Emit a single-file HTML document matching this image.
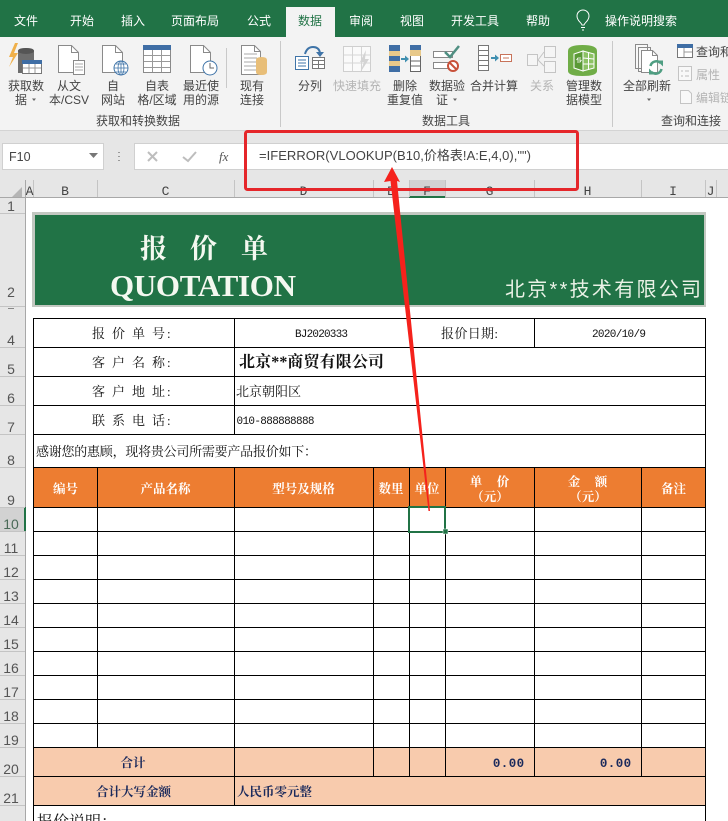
<!DOCTYPE html>
<html lang="zh"><head><meta charset="utf-8"><title>报价单</title>
<style>
html,body{margin:0;padding:0;background:#fff;width:728px;height:821px;overflow:hidden}
svg{display:block}
.s{font-family:"Liberation Sans","Noto Sans CJK SC",sans-serif}
.t{font-family:"Liberation Serif","Noto Serif CJK SC",serif}
.rb{font-size:12px;fill:#444;text-anchor:middle}
.dis{fill:#b4b4b4}
.tab{font-size:12px;fill:#fff;text-anchor:middle}
.col{font-family:"Liberation Mono","Noto Serif CJK SC",monospace;font-size:13px;fill:#444;text-anchor:middle}
.row{font-family:"Liberation Sans",sans-serif;font-size:14px;fill:#555;text-anchor:middle}
.c{font-size:13px;fill:#111}
.h{font-size:12.5px;fill:#fff;font-weight:700;text-anchor:middle}
.n{font-size:12.5px;fill:#1b2a5c;font-weight:700}
.doc{fill:#fff;stroke:#8a8a8a;stroke-width:1}
</style></head><body>
<svg width="728" height="821" viewBox="0 0 728 821" xmlns="http://www.w3.org/2000/svg" class="s">
<!-- title/tab bar -->
<rect width="728" height="37" fill="#217346"/>
<rect x="286" y="7" width="49" height="31" fill="#f3f3f3"/>
<g class="tab">
<text x="26" y="25">文件</text><text x="82" y="25">开始</text><text x="133" y="25">插入</text><text x="195" y="25">页面布局</text><text x="259" y="25">公式</text>
<text x="310" y="25" style="fill:#217346">数据</text>
<text x="361" y="25">审阅</text><text x="412" y="25">视图</text><text x="475" y="25">开发工具</text><text x="538" y="25">帮助</text>
<text x="641" y="25">操作说明搜索</text>
</g>
<g fill="none" stroke="#fff" stroke-width="1"><path d="M582 25c-1-3-5-4-5-9a6 6 0 0 1 12 0c0 5-4 6-5 9z"/><path d="M581 27.500h4M582 30h2"/></g>
<!-- ribbon -->
<rect y="37" width="728" height="94" fill="#f3f3f3"/>
<rect y="131" width="728" height="67" fill="#e6e6e6"/>
<path d="M0 130.500H728" stroke="#d4d4d4"/>
<g stroke="#c9c9c9"><path d="M280.500 41V127M612.500 41V127M226.500 48V88"/></g>
<!-- icon: get data -->
<path d="M15 43l-6 14h4l-4 10 9-14h-4l4-10z" fill="#f0b04a"/>
<path d="M18 51q0-3 8-3t8 3v22H18z" fill="#6d6d6d"/><ellipse cx="26" cy="51" rx="8" ry="3" fill="#555"/>
<rect x="22.500" y="60.500" width="19" height="13" fill="#fff" stroke="#777"/><rect x="22" y="60" width="20" height="4" fill="#3f6ea5"/>
<path d="M29 64v9M35 64v9M23 68h18" stroke="#999"/>
<!-- icon: from text -->
<path class="doc" d="M58.500 45.500h13l7 7v20h-20z"/><path d="M71.500 45.500v7h7" fill="none" stroke="#8a8a8a"/>
<rect x="73.500" y="60.500" width="11" height="14" fill="#fff" stroke="#8a8a8a"/><path d="M75 64h8M75 67h8M75 70h8" stroke="#aaa"/>
<!-- icon: web -->
<path class="doc" d="M102.500 45.500h13l7 7v20h-20z"/><path d="M115.500 45.500v7h7" fill="none" stroke="#8a8a8a"/>
<circle cx="121" cy="68" r="7" fill="#fff" stroke="#3f74a8"/><path d="M114 68h14M121 61v14M116 64h10M116 72h10" stroke="#3f74a8" stroke-width=".8"/><ellipse cx="121" cy="68" rx="3" ry="7" fill="none" stroke="#3f74a8" stroke-width=".8"/>
<!-- icon: table -->
<rect x="143.500" y="45.500" width="27" height="27" fill="#fff" stroke="#8a8a8a"/><rect x="143" y="45" width="28" height="5" fill="#3f6ea5"/>
<path d="M152.500 50v22M161.500 50v22M144 55.500h26M144 61.500h26M144 67.500h26" stroke="#999"/>
<!-- icon: recent -->
<path class="doc" d="M190.500 45.500h13l7 7v20h-20z"/><path d="M203.500 45.500v7h7" fill="none" stroke="#8a8a8a"/>
<circle cx="210" cy="68" r="7" fill="#fff" stroke="#3f74a8"/><path d="M210 63v5h4" fill="none" stroke="#666"/>
<!-- icon: existing -->
<path class="doc" d="M241.500 45.500h13l6 6v23h-19z"/><path d="M254.500 45.500v6h6" fill="none" stroke="#8a8a8a"/><path d="M244 54h13M244 58h13M244 62h13M244 66h13M244 70h13" stroke="#aaa"/>
<path d="M256 60q0-3 5.500-3t5.500 3v12q0 3-5.500 3t-5.500-3z" fill="#e8be78"/>
<!-- icon: text to columns -->
<rect x="295.500" y="56.500" width="13" height="13" fill="#fff" stroke="#3f74a8"/><path d="M298 60h8M298 63h8M298 66h8" stroke="#3f74a8"/>
<rect x="312.500" y="57.500" width="12" height="11" fill="#fff" stroke="#777"/><path d="M312 60.500h13M318.500 60v8M313 64.500h11" stroke="#777"/>
<path d="M305 54q2-7 8-7t7 6" fill="none" stroke="#3f74a8" stroke-width="2"/><path d="M316 52h8l-4 5z" fill="#3f74a8"/>
<!-- icon: flash fill -->
<rect x="343.500" y="46.500" width="27" height="25" fill="#fafafa" stroke="#cfcfcf"/><path d="M352.500 47v24M361.500 47v24M344 55h26M344 63h26" stroke="#d5d5d5"/><path d="M366 50l-6 12h4l-4 11 9-14h-4z" fill="#d4d4d4"/>
<!-- icon: remove dup -->
<rect x="389" y="45" width="11" height="27" fill="#3f6ea5"/><rect x="389" y="51" width="11" height="5" fill="#e8c98a"/><rect x="389" y="61" width="11" height="5" fill="#e8c98a"/>
<rect x="410.500" y="45.500" width="10" height="26" fill="#fff" stroke="#666"/><rect x="410" y="45" width="11" height="5" fill="#3f6ea5"/><rect x="410" y="50" width="11" height="6" fill="#e8c98a"/><path d="M411 61h10M411 66h10" stroke="#666"/>
<path d="M401 59h5" stroke="#3f8fb0" stroke-width="2"/><path d="M405 55.500l4 3.500-4 3.500z" fill="#3f8fb0"/>
<!-- icon: validation -->
<rect x="433.500" y="51.500" width="19" height="6" fill="#fff" stroke="#888"/><rect x="433.500" y="62.500" width="19" height="6" fill="#fff" stroke="#888"/>
<path d="M445 52l5 5 9-11" fill="none" stroke="#4f8f82" stroke-width="2.500"/>
<circle cx="453" cy="66" r="5" fill="#fff" stroke="#c8513a" stroke-width="2"/><path d="M449.500 62.500l7 7" stroke="#c8513a" stroke-width="2"/>
<!-- icon: consolidate -->
<rect x="478.500" y="45.500" width="10" height="25" fill="#fff" stroke="#777"/><path d="M479 50.500h9M479 55.500h9M479 60.500h9M479 65.500h9" stroke="#777"/>
<path d="M491 58h5" stroke="#3f8fb0" stroke-width="2"/><path d="M495 54.500l4 3.500-4 3.500z" fill="#3f8fb0"/>
<rect x="500.500" y="54.500" width="11" height="7" fill="#fff" stroke="#c8735a"/><path d="M503 58h6" stroke="#c8735a"/>
<!-- icon: relations -->
<g fill="#f5f5f5" stroke="#c4c4c4"><rect x="527.500" y="54.500" width="10" height="11"/><rect x="544.500" y="46.500" width="11" height="11"/><rect x="544.500" y="61.500" width="11" height="11"/><path d="M538 60l6-8M538 60l6 6" fill="none"/></g>
<!-- icon: data model -->
<path d="M568 51q0-6 14.500-6t14.500 6v20q0 5-14.500 5t-14.500-5z" fill="#70ad47"/>
<path d="M574 54l9-3v20l-9-3z" fill="#5a9a36" stroke="#fff" stroke-width="1"/><path d="M583 51l11 3v14l-11 3z" fill="#8cc264" stroke="#fff"/><path d="M583 58l11 1M583 64l11 0M588.500 52v18" stroke="#fff"/>
<path d="M578 63v-5l-1.500 2M580 57v5l1.500-2" fill="none" stroke="#fff" stroke-width=".8"/>
<!-- icon: refresh all -->
<path d="M635.500 44.500h12v24h-12zM638.500 47.500h12v24h-12z" fill="#f8f8f8" stroke="#8a8a8a"/>
<path class="doc" d="M641.500 50.500h11l5 5v17h-16z"/><path d="M652.500 50.500v5h5" fill="none" stroke="#8a8a8a"/>
<path d="M650.500 66a6 6 0 0 1 10-3" fill="none" stroke="#4f9e82" stroke-width="2.500"/><path d="M657 60.500h6v6z" fill="#4f9e82"/>
<path d="M661.500 69a6 6 0 0 1-10 3" fill="none" stroke="#4f9e82" stroke-width="2.500"/><path d="M655 74.500h-6v-6z" fill="#4f9e82"/>
<!-- small -->
<rect x="677.500" y="44.500" width="15" height="13" fill="#fff" stroke="#777"/><rect x="677" y="44" width="16" height="4" fill="#3f6ea5"/><path d="M684 48v9M684 52h8" stroke="#999"/>
<rect x="678.500" y="66.500" width="13" height="14" fill="#f8f8f8" stroke="#c4c4c4"/><path d="M681 71h2M685 71h4M681 76h2M685 76h4" stroke="#bbb"/>
<path d="M680.500 90.500h8l3 3v10h-11z" fill="#f8f8f8" stroke="#c4c4c4"/>
<!-- ribbon labels -->
<g class="rb">
<text x="26" y="90">获取数</text><text x="21" y="104">据</text>
<text x="69" y="90">从文</text><text x="69" y="104">本/CSV</text>
<text x="113" y="90">自</text><text x="113" y="104">网站</text>
<text x="157" y="90">自表</text><text x="157" y="104">格/区域</text>
<text x="201" y="90">最近使</text><text x="201" y="104">用的源</text>
<text x="252" y="90">现有</text><text x="252" y="104">连接</text>
<text x="310" y="90">分列</text>
<text x="357" y="90" class="rb dis">快速填充</text>
<text x="405" y="90">删除</text><text x="405" y="104">重复值</text>
<text x="447" y="90">数据验</text><text x="442" y="104">证</text>
<text x="494" y="90">合并计算</text>
<text x="542" y="90" class="rb dis">关系</text>
<text x="584" y="90">管理数</text><text x="584" y="104">据模型</text>
<text x="647" y="90">全部刷新</text>
<text x="138" y="125">获取和转换数据</text>
<text x="446" y="125">数据工具</text>
<text x="691" y="125">查询和连接</text>
</g>
<path d="M32 98.500h4l-2 2.500zM453 98.500h4l-2 2.500zM647 98.500h4l-2 2.500z" fill="#666"/>
<g font-size="12"><text x="696" y="56" fill="#444">查询和连接</text><text x="696" y="79" fill="#b4b4b4">属性</text><text x="696" y="102" fill="#b4b4b4">编辑链接</text></g>
<!-- formula bar -->
<rect x="2.500" y="143.500" width="101" height="26" fill="#fff" stroke="#d0d0d0"/>
<text x="9" y="161" font-size="12.500" fill="#444">F10</text>
<path d="M89 153h9l-4.500 5z" fill="#777"/>
<path d="M119 152v1M119 156v1M119 160v1" stroke="#999" stroke-width="2"/>
<rect x="134.500" y="143.500" width="594" height="26" fill="#fff" stroke="#d0d0d0"/>
<path d="M148 152l9 9M157 152l-9 9" stroke="#bdbdbd" stroke-width="2"/>
<path d="M183 157l5 4 8-9" fill="none" stroke="#bdbdbd" stroke-width="2"/>
<text x="219" y="161" font-size="13" font-style="italic" font-family="Liberation Serif,serif" fill="#555">fx</text>
<text x="259" y="160" font-size="13" fill="#444" textLength="272">=IFERROR(VLOOKUP(B10,价格表!A:E,4,0),"")</text>
<!-- row headers & col headers -->
<rect y="180" width="728" height="17" fill="#e6e6e6"/>
<rect y="198" width="26" height="623" fill="#e6e6e6"/>
<rect x="25" y="198" width="703" height="623" fill="#fff"/>
<path d="M12 197l10-10v10z" fill="#b5b5b5"/>
<path d="M0 197.500H728M25.500 180V821" stroke="#a8a8a8" fill="none"/>
<rect x="409" y="180" width="36" height="17" fill="#d2d2d2"/><rect x="409" y="196" width="36" height="2" fill="#217346"/>
<rect y="507" width="25" height="24" fill="#d2d2d2"/><rect x="24" y="507" width="2" height="24" fill="#217346"/>
<g stroke="#c4c4c4"><path d="M33.500 180v17M97.500 180v17M234.500 180v17M373.500 180v17M409.500 180v17M445.500 180v17M534.500 180v17M641.500 180v17M705.500 180v17M716.500 180v17"/>
<path d="M0 213.500h25M0 306.500h25M0 347.500h25M0 376.500h25M0 405.500h25M0 434.500h25M0 467.500h25M0 507.500h25M0 531.500h25M0 555.500h25M0 579.500h25M0 603.500h25M0 627.500h25M0 651.500h25M0 675.500h25M0 699.500h25M0 723.500h25M0 747.500h25M0 776.500h25M0 805.500h25"/></g>
<path d="M8 308.500h6" stroke="#888"/>
<g class="col"><text x="29.500" y="195">A</text><text x="65" y="195">B</text><text x="165.500" y="195">C</text><text x="303.500" y="195">D</text><text x="391" y="195">E</text><text x="427" y="195">F</text><text x="489.500" y="195">G</text><text x="587.500" y="195">H</text><text x="673" y="195">I</text><text x="710.500" y="195">J</text></g>
<g class="row"><text x="11" y="211">1</text><text x="11" y="297">2</text><text x="11" y="345">4</text><text x="11" y="374">5</text><text x="11" y="403">6</text><text x="11" y="432">7</text><text x="11" y="465">8</text><text x="11" y="505">9</text><text x="11" y="529" style="fill:#4a6a58">10</text><text x="11" y="553">11</text><text x="11" y="577">12</text><text x="11" y="601">13</text><text x="11" y="625">14</text><text x="11" y="649">15</text><text x="11" y="673">16</text><text x="11" y="697">17</text><text x="11" y="721">18</text><text x="11" y="745">19</text><text x="11" y="774">20</text><text x="11" y="803">21</text></g>
<!-- banner -->
<rect x="32" y="212" width="674" height="95" fill="#c3c8c1"/>
<rect x="35" y="215" width="669" height="90" fill="#217346"/>
<g class="t" fill="#f4f8f0"><text x="140 190 241" y="258" font-size="27" font-weight="700">报价单</text>
<text x="110" y="296" font-size="31" font-weight="700" textLength="186">QUOTATION</text></g>
<text x="505" y="296" font-size="20" fill="#eaf2e6" textLength="196">北京**技术有限公司</text>
<!-- table fills -->
<rect x="33" y="467" width="672" height="40" fill="#ed7d31"/>
<rect x="33" y="747" width="672" height="58" fill="#f8cbad"/>
<!-- table lines -->
<g stroke="#000" fill="none">
<path d="M33.500 318.500H705.500M33.500 347.500H705.500M33.500 376.500H705.500M33.500 405.500H705.500M33.500 434.500H705.500M33.500 467.500H705.500M33.500 507.500H705.500"/>
<path d="M33.500 531.500H705.500M33.500 555.500H705.500M33.500 579.500H705.500M33.500 603.500H705.500M33.500 627.500H705.500M33.500 651.500H705.500M33.500 675.500H705.500M33.500 699.500H705.500M33.500 723.500H705.500M33.500 747.500H705.500M33.500 776.500H705.500M33.500 805.500H705.500"/>
<path d="M33.500 318V821M705.500 318V821M234.500 318V434M534.500 318V347"/>
<path d="M97.500 467V747M234.500 467V805M373.500 467V776M409.500 467V776M445.500 467V776M534.500 467V776M641.500 467V776"/>
</g>
<!-- table text -->
<g class="t">
<text class="c" x="92 112 132 152 167" y="338">报价单号:</text>
<text class="c" x="92 112 132 152 167" y="367">客户名称:</text>
<text class="c" x="92 112 132 152 167" y="396">客户地址:</text>
<text class="c" x="92 112 132 152 167" y="425">联系电话:</text>
<text x="295" y="337" font-size="11" fill="#111" font-family="Liberation Mono,monospace" textLength="53">BJ2020333</text>
<text class="c" x="441" y="338" textLength="57">报价日期:</text>
<text x="592" y="337" font-size="11" fill="#111" font-family="Liberation Mono,monospace" textLength="54">2020/10/9</text>
<text x="239" y="367" font-size="16" font-weight="700" fill="#111" textLength="145">北京**商贸有限公司</text>
<text class="c" x="236" y="396">北京朝阳区</text>
<text x="236.500" y="424" font-size="11" fill="#111" font-family="Liberation Mono,monospace" textLength="78">010-888888888</text>
<text class="c" x="36" y="456" textLength="281">感谢您的惠顾&#xFF0C;现将贵公司所需要产品报价如下&#xFF1A;</text>
<g class="h">
<text x="65.500" y="493">编号</text><text x="165.500" y="493">产品名称</text><text x="303.500" y="493">型号及规格</text>
<text x="391" y="493">数里</text><text x="427" y="493">单位</text>
<text x="476" y="486">单</text><text x="503" y="486">价</text><text x="490" y="501">&#xFF08;元&#xFF09;</text>
<text x="574" y="486">金</text><text x="601" y="486">额</text><text x="588" y="501">&#xFF08;元&#xFF09;</text>
<text x="673.500" y="493">备注</text>
</g>
<text class="n" x="133" y="767" text-anchor="middle">合计</text>
<text class="n" x="133.500" y="796" text-anchor="middle" font-size="13">合计大写金额</text>
<text class="n" x="237" y="796" font-size="13">人民币零元整</text>
<text class="n" x="524.500" y="767" text-anchor="end" font-size="12" font-family="Liberation Mono,monospace" letter-spacing=".4">0.00</text>
<text class="n" x="631.500" y="767" text-anchor="end" font-size="12" font-family="Liberation Mono,monospace" letter-spacing=".4">0.00</text>
<text x="37" y="827" font-size="16" fill="#111">报价说明&#xFF1A;</text>
</g>
<!-- selected cell -->
<rect x="409" y="507" width="36" height="25" fill="none" stroke="#217346" stroke-width="2"/>
<rect x="443" y="529" width="5" height="5" fill="#217346" stroke="#fff" stroke-width=".5"/>
<!-- red annotation -->
<rect x="245.500" y="131.500" width="332" height="58" rx="2" fill="none" stroke="#e5262a" stroke-width="3"/>
<path d="M392 167L384 182L390.500 181L428.500 511L430 511L397 181L400 182z" fill="#f5221c"/>
</svg>
</body></html>
